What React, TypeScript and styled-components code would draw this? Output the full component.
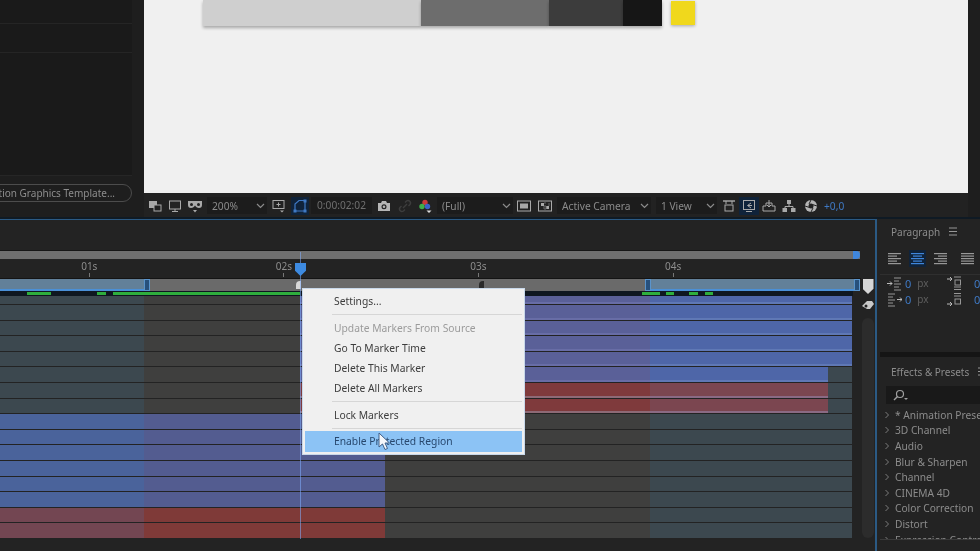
import React from "react";
import styled, { createGlobalStyle } from "styled-components";

const FONT = `"Noto Sans", "Open Sans", "Liberation Sans", sans-serif`;

const GlobalStyle = createGlobalStyle`
  html, body { margin: 0; padding: 0; background: #232323; }
  * { box-sizing: border-box; }
  svg { flex-shrink: 0; }
`;

type Tone = "gray" | "grayTint" | "blueLeft" | "blueMid" | "blueRight" | "blueFade" | "redLeft" | "redLow" | "redMid" | "redRight";

const TONES: Record<Tone, string> = {
  gray: "#3f3f3e",
  grayTint: "#3c484f",
  blueLeft: "#4a639b",
  blueMid: "#535c90",
  blueRight: "#4e66a8",
  blueFade: "#5a6098",
  redLeft: "#734652",
  redLow: "#7f3a38",
  redMid: "#7f3a3c",
  redRight: "#7b4650",
};

const STRIPES: Partial<Record<Tone, string>> = {
  blueFade: "#686da6",
  blueRight: "#5f78b5",
  redMid: "#8e6a76",
  redRight: "#8a6a84",
};

const COLUMNS = [144, 156, 85, 265, 178, 24];

const topBlue: Tone[] = ["grayTint", "gray", "blueFade", "blueFade", "blueRight", "blueRight"];
const shortBlue: Tone[] = ["grayTint", "gray", "blueFade", "blueFade", "blueRight", "grayTint"];
const shortRed: Tone[] = ["grayTint", "gray", "redMid", "redMid", "redRight", "grayTint"];
const lowBlue: Tone[] = ["blueLeft", "blueMid", "blueMid", "gray", "grayTint", "grayTint"];
const lowRed: Tone[] = ["redLeft", "redLow", "redLow", "gray", "grayTint", "grayTint"];

const TRACKS: Tone[][] = [
  topBlue, topBlue, topBlue, topBlue, topBlue,
  shortBlue, shortRed, shortRed,
  lowBlue, lowBlue, lowBlue, lowBlue, lowBlue, lowBlue,
  lowRed, lowRed,
];

const CACHE: [number, boolean][] = [
  [27, false], [24, true], [46, false], [9, true], [7, false], [187, true],
  [342, false], [18, true], [6, false], [8, true], [15, false], [9, true], [7, false], [8, true],
];

const EFFECTS = ["* Animation Presets", "3D Channel", "Audio", "Blur & Sharpen", "Channel", "CINEMA 4D", "Color Correction", "Distort", "Expression Controls"];

const Page = styled.div`
  width: 980px;
  height: 551px;
  overflow: hidden;
  display: flex;
  flex-direction: column;
  background: #232323;
  font-family: ${FONT};
  filter: blur(0.5px);
`;

const TopArea = styled.div`
  height: 217px;
  display: flex;
  flex: none;
  background: #1e1e1e;
`;

const LeftPanel = styled.div`
  width: 132px;
  flex: none;
  display: flex;
  flex-direction: column;
  align-items: flex-end;
`;

const ProjectList = styled.div`
  width: 100%;
  height: 176px;
  background: #1a1a1a;
  border-bottom: 1px solid #262626;
`;

const ProjectRow = styled.div<{ $h: number }>`
  height: ${(p) => p.$h}px;
  border-bottom: 1px solid #252525;
`;

const TemplateButton = styled.div`
  flex: none;
  width: 170px;
  height: 18px;
  margin-top: 8px;
  padding-right: 16px;
  border: 1.5px solid #4c4c4c;
  border-radius: 9px;
  font-size: 10px;
  line-height: 16px;
  text-align: right;
  color: #8d8d8d;
  white-space: nowrap;
`;

const Viewer = styled.div`
  width: 824px;
  margin-left: 12px;
  flex: none;
  display: flex;
  flex-direction: column;
`;

const Canvas = styled.div`
  height: 193px;
  flex: none;
  background: #f0f0f0;
  padding-left: 59px;
  display: flex;
  align-items: flex-start;
`;

const Swatch = styled.div<{ $w: number; $c: string }>`
  width: ${(p) => p.$w}px;
  height: 26px;
  background: ${(p) => p.$c};
  box-shadow: 0 2px 3px rgba(0, 0, 0, 0.3);
`;

const YellowSwatch = styled.div`
  width: 24px;
  height: 24px;
  margin: 1px 0 0 9px;
  background: #f0d81c;
  box-shadow: 0 1px 3px rgba(0, 0, 0, 0.3);
`;

const Toolbar = styled.div`
  flex: 1;
  display: flex;
  align-items: center;
  padding: 1px 0 0 1px;
  background: #222;
  color: #8b8b8b;
  font-size: 10.2px;
`;

const ToolSlot = styled.div<{ $w?: number; $active?: boolean; $ml?: number }>`
  width: ${(p) => p.$w ?? 20}px;
  height: 18px;
  margin-left: ${(p) => p.$ml ?? 0}px;
  flex: none;
  display: flex;
  align-items: center;
  justify-content: center;
  background: ${(p) => (p.$active ? "#10233a" : "transparent")};
`;

const Select = styled.div<{ $w: number; $ml?: number }>`
  width: ${(p) => p.$w}px;
  height: 17px;
  margin-left: ${(p) => p.$ml ?? 0}px;
  flex: none;
  padding: 0 2px 0 5px;
  display: flex;
  align-items: center;
  justify-content: space-between;
  background: #1c1c1c;
  white-space: nowrap;
`;

const Timecode = styled.div`
  width: 61px;
  height: 17px;
  margin-left: 2px;
  flex: none;
  background: #1c1c1c;
  color: #6f6f6f;
  line-height: 17px;
  text-align: center;
`;

const Exposure = styled.span`
  margin-left: 3px;
  color: #3f79c4;
`;

const BottomArea = styled.div`
  flex: 1;
  display: flex;
  min-height: 0;
  border-top: 2px solid #0f1a24;
`;

const TimelinePanel = styled.div`
  width: 877px;
  flex: none;
  position: relative;
  background: #232323;
  border-top: 1px solid #2b5a84;
  border-right: 2px solid #2b5a84;
  display: flex;
  padding-top: 31px;
`;

const TimeColumn = styled.div`
  width: 861px;
  flex: none;
  display: flex;
  flex-direction: column;
`;

const RangeBar = styled.div`
  height: 8px;
  width: 860px;
  flex: none;
  display: flex;
  justify-content: flex-end;
  background: #6f6f6f;
  box-shadow: 0 -1px 0 #161616;
`;

const RangeEnd = styled.div`
  width: 7px;
  background: #3f86dc;
  border-radius: 0 4px 4px 0;
`;

const Ruler = styled.div`
  height: 20px;
  flex: none;
  display: flex;
  margin-left: -8px;
  border-bottom: 1px solid #141414;
`;

const RulerMark = styled.div`
  width: 194.6px;
  flex: none;
  font-size: 10px;
  line-height: 14px;
  text-align: center;
  color: #8d8d8d;

  &::after {
    content: "";
    display: block;
    width: 1px;
    height: 4px;
    margin: 0 auto;
    background: #777;
  }
`;

const WorkBar = styled.div`
  height: 12px;
  flex: none;
  display: flex;
  width: 860px;
`;

const WorkSegment = styled.div<{ $w: number; $on?: boolean }>`
  width: ${(p) => p.$w}px;
  flex: none;
  background: ${(p) => (p.$on ? "#628099" : "#6a6a6a")};
  border-bottom: ${(p) => (p.$on ? "2px solid #4a90d8" : "none")};
`;

const BlueMarker = styled.div`
  width: 6px;
  flex: none;
  background: #27507c;
  border: 1px solid #5a94cc;
`;

const CommentSlot = styled.div`
  width: 5px;
  flex: none;
  background: #6a6a6a;
  padding-top: 2px;
`;

const CommentMarker = styled.div<{ $light?: boolean }>`
  height: 8px;
  background: ${(p) => (p.$light ? "#d8d8d8" : "#2a2a2a")};
  border-radius: 4px 0 0 0;
`;

const CacheBar = styled.div`
  height: 5px;
  flex: none;
  width: 853px;
  display: flex;
  align-items: center;
  background: #0f1720;
`;

const CacheSegment = styled.div<{ $w: number; $on: boolean }>`
  width: ${(p) => p.$w}px;
  height: 3px;
  flex: none;
  background: ${(p) => (p.$on ? "#2fae3d" : "transparent")};
`;

const TrackRow = styled.div<{ $short?: boolean }>`
  height: ${(p) => (p.$short ? 9 : 15.6)}px;
  flex: none;
  display: flex;
  width: 852px;
  border-bottom: 1px solid #232323;
`;

const TrackCell = styled.div<{ $w: number; $tone: Tone }>`
  width: ${(p) => p.$w}px;
  flex: none;
  background: ${(p) => TONES[p.$tone]};
  box-shadow: ${(p) => (STRIPES[p.$tone] ? `inset 0 -2px 0 ${STRIPES[p.$tone]}` : "none")};
`;

const Rail = styled.div`
  flex: 1;
  display: flex;
  flex-direction: column;
  align-items: center;
  padding-top: 28px;
`;

const Shield = styled.div`
  width: 11px;
  height: 15px;
  background: #d6d6d6;
  clip-path: polygon(0 0, 100% 0, 100% 65%, 50% 100%, 0 65%);
`;

const ZoomHandle = styled.div`
  height: 22px;
  display: flex;
  align-items: center;
`;

const RailTrack = styled.div`
  width: 12px;
  height: 220px;
  margin-top: 2px;
  background: #2c2c2c;
  border-radius: 6px;
`;

const Playhead = styled.div`
  position: absolute;
  left: 300px;
  top: 32px;
  width: 1px;
  height: 287px;
  background: rgba(130, 175, 255, 0.55);
`;

const PlayheadCap = styled.div`
  position: absolute;
  left: -5px;
  top: 11px;
  width: 11px;
  height: 13px;
  background: #3d8ae0;
  clip-path: polygon(0 0, 100% 0, 100% 60%, 50% 100%, 0 60%);
`;

const Menu = styled.div`
  position: absolute;
  left: 303px;
  top: 69px;
  width: 221px;
  height: 165px;
  padding: 2px;
  background: #f0f0f0;
  box-shadow: 0 0 0 1px #c8d8ea;
  font-size: 10.3px;
  color: #3d3d3d;
`;

const MenuItem = styled.div<{ $disabled?: boolean; $active?: boolean }>`
  height: ${(p) => (p.$active ? 21 : 20)}px;
  padding-left: 29px;
  line-height: ${(p) => (p.$active ? 21 : 20)}px;
  white-space: nowrap;
  color: ${(p) => (p.$disabled ? "#9b9b9b" : p.$active ? "#28486e" : "#3d3d3d")};
  background: ${(p) => (p.$active ? "#8cc3f5" : "transparent")};
`;

const MenuSeparator = styled.div<{ $h: number }>`
  height: ${(p) => p.$h}px;
  margin-left: 27px;
  display: flex;
  align-items: center;

  &::after {
    content: "";
    display: block;
    width: 100%;
    height: 1px;
    background: #d6d6d6;
  }
`;

const CursorIcon = styled.svg`
  position: absolute;
  left: 74px;
  top: 143px;
`;

const SidePanels = styled.div`
  flex: 1;
  min-width: 0;
  display: flex;
  flex-direction: column;
  margin-left: 3px;
  color: #8c8c8c;
  font-size: 10px;
  overflow: hidden;
`;

const ParagraphPanel = styled.div`
  height: 133px;
  flex: none;
  background: #232323;
`;

const PanelHeader = styled.div<{ $h: number }>`
  height: ${(p) => p.$h}px;
  padding-left: 11px;
  display: flex;
  align-items: center;
  gap: 9px;
  white-space: nowrap;
`;

const AlignRow = styled.div`
  height: 31px;
  padding: 0 0 2px 6px;
  display: flex;
  align-items: center;
  gap: 6px;
  border-bottom: 1px solid #2f2f2f;
`;

const AlignButton = styled.div<{ $active?: boolean; $ml?: number }>`
  width: 17px;
  height: 17px;
  flex: none;
  margin-left: ${(p) => p.$ml ?? 0}px;
  display: flex;
  align-items: center;
  justify-content: center;
  background: ${(p) => (p.$active ? "#10233a" : "transparent")};
`;

const IndentRow = styled.div`
  height: 16px;
  display: flex;
  align-items: center;
  padding-left: 6px;
  font-size: 10px;
`;

const IndentGroup = styled.div<{ $gap: number; $w: number }>`
  width: ${(p) => p.$w}px;
  flex: none;
  display: flex;
  align-items: center;
  gap: ${(p) => p.$gap}px;
`;

const BlueValue = styled.span`
  color: #3f79c4;
  font-size: 11px;
  line-height: 1;
`;

const DimUnit = styled.span`
  color: #5e5e5e;
  margin-left: 3px;
`;

const PanelGap = styled.div`
  height: 5px;
  flex: none;
  background: #151515;
`;

const EffectsPanel = styled.div`
  flex: 1;
  min-height: 0;
  background: #232323;
`;

const SearchBox = styled.div`
  height: 18px;
  margin: 0 0 3px 6px;
  padding-left: 6px;
  display: flex;
  align-items: center;
  background: #191919;
`;

const EffectList = styled.div`
  height: 133px;
  overflow: hidden;
  border-bottom: 1px solid #3a3a3a;
`;

const EffectRow = styled.div`
  height: 15.6px;
  display: flex;
  align-items: center;
  gap: 6px;
  padding-left: 5px;
  font-size: 10.2px;
  white-space: nowrap;
`;

const Svg = ({ children, size = 16, w }: { children: React.ReactNode; size?: number; w?: number }) => (
  <svg width={w ?? size} height={size} viewBox={`0 0 ${w ?? size} ${size}`} fill="none">
    {children}
  </svg>
);

const G = "#a9a9a9";

const Icons = {
  snapshotStack: (
    <Svg>
      <rect x="2" y="3" width="8" height="7" fill={G} />
      <rect x="7" y="7" width="7" height="6" fill="#222" stroke={G} />
    </Svg>
  ),
  monitor: (
    <Svg>
      <rect x="2.5" y="3" width="11" height="8" stroke={G} />
      <path d="M8 11v2M5 13.5h6" stroke={G} />
    </Svg>
  ),
  mask: (
    <Svg>
      <path d="M1 3h14v4c0 2-1 3-3 3s-3-1-4-2.500C7 9 6 10 4 10S1 9 1 7z" fill={G} />
      <circle cx="4.500" cy="6.500" r="1.500" fill="#222" />
      <circle cx="11.500" cy="6.500" r="1.500" fill="#222" />
      <path d="M6 12h4l-2 2.500z" fill={G} />
    </Svg>
  ),
  region: (
    <Svg>
      <rect x="2" y="2.500" width="11" height="8" stroke={G} />
      <path d="M7.500 4.500v4M5.500 6.500h4" stroke={G} />
      <path d="M9 12.500h4l-2 2z" fill={G} />
    </Svg>
  ),
  roi: (
    <Svg>
      <path d="M3 13V6l4-3.500h6V13z" stroke="#3f79c4" strokeWidth="1.200" />
      <rect x="1.500" y="11.500" width="3" height="3" fill="#3f79c4" />
      <rect x="11.500" y="11.500" width="3" height="3" fill="#3f79c4" />
      <rect x="11.500" y="1.500" width="3" height="3" fill="#3f79c4" />
    </Svg>
  ),
  camera: (
    <Svg>
      <path d="M2 5h3l1-2h4l1 2h3v8H2z" fill="#b5b5b5" />
      <circle cx="8" cy="8.800" r="2.500" fill="#222" />
      <circle cx="8" cy="8.800" r="1.300" fill="#b5b5b5" />
    </Svg>
  ),
  link: (
    <Svg>
      <path d="M6 10l4-4M4.500 8l-1.500 1.500a2.500 2.500 0 0 0 3.500 3.500L8 11.500M8 4.500 9.500 3A2.500 2.500 0 0 1 13 6.500L11.500 8" stroke="#3d3d3d" strokeWidth="1.400" />
    </Svg>
  ),
  dots: (
    <Svg>
      <circle cx="8" cy="4.500" r="2.700" fill="#c83a3a" />
      <circle cx="5" cy="8.500" r="2.700" fill="#3fae4a" />
      <circle cx="10.500" cy="8.500" r="2.700" fill="#3a62c8" />
      <path d="M9.500 12.500h5l-2.500 2.500z" fill="#ddd" />
    </Svg>
  ),
  fit: (
    <Svg>
      <rect x="1.500" y="3" width="13" height="10" stroke={G} />
      <rect x="4" y="5.500" width="8" height="5" fill={G} />
    </Svg>
  ),
  checker: (
    <Svg>
      <rect x="1.500" y="3" width="13" height="10" stroke={G} />
      <path d="M4 5h3v3H4zM9 8h3v3H9z" fill={G} />
      <path d="M7 8h2v3H7zM7 5h2M12 5v3" stroke="#666" />
    </Svg>
  ),
  fastPreview: (
    <Svg>
      <path d="M2 3h12" stroke={G} strokeWidth="1.400" />
      <path d="M5 3v3M11 3v3" stroke={G} />
      <rect x="4" y="7" width="8" height="6" stroke={G} />
    </Svg>
  ),
  timeline: (
    <Svg>
      <rect x="2.500" y="2.500" width="11" height="9" stroke={G} />
      <path d="M10 5 6.500 7.500 10 10M7 7.500h4" stroke={G} />
      <path d="M5 13.500h6" stroke={G} />
    </Svg>
  ),
  comp: (
    <Svg>
      <path d="M2 8h3V5h6v3h3v5H2z" stroke={G} />
      <path d="M8 2v7M6 7l2 2 2-2" stroke={G} />
    </Svg>
  ),
  flow: (
    <Svg>
      <rect x="6" y="2" width="4" height="4" fill={G} />
      <rect x="1.500" y="10" width="4.500" height="4" fill={G} />
      <rect x="10" y="10" width="4.500" height="4" fill={G} />
      <path d="M8 6v2.500M4 10V8.500h8V10" stroke={G} />
    </Svg>
  ),
  exposure: (
    <Svg>
      <circle cx="8" cy="8" r="6" fill="#b5b5b5" />
      <circle cx="8" cy="8" r="2.500" fill="#222" />
      <path d="M8 2 6 6M14 8 9.500 6.500M8 14l2-4M2 8l4.500 1.500" stroke="#222" />
    </Svg>
  ),
};

const Chevron = () => (
  <Svg size={6} w={9}>
    <path d="M1 1l3.500 3.500L8 1" stroke="#8b8b8b" strokeWidth="1.200" />
  </Svg>
);

const PanelMenuIcon = () => (
  <Svg size={9} w={9}>
    <path d="M0 1h8M0 4.500h8M0 8h8" stroke="#979797" />
  </Svg>
);

const AlignLines = ({ align, color = "#979797" }: { align: "left" | "center" | "right" | "full"; color?: string }) => {
  const widths = [13, 9, 13, 9, 13];
  return (
    <Svg size={13} w={13}>
      {widths.map((w, i) => {
        const len = align === "full" ? 13 : w;
        const x = align === "left" || align === "full" ? 0 : align === "right" ? 13 - len : (13 - len) / 2;
        return <rect key={i} x={x} y={1 + i * 2.500} width={len} height="1.200" fill={color} />;
      })}
    </Svg>
  );
};

const IndentIcon = ({ variant }: { variant: 0 | 1 | 2 | 3 }) => (
  <Svg size={15} w={16}>
    {variant < 2 ? (
      <>
        <path d={variant === 0 ? "M1 7.500h5M4 5.500l2 2-2 2" : "M11 7.500h5M14 5.500l2 2-2 2"} stroke="#bbb" />
        <path d={variant === 0 ? "M8 2h7M8 5h5M8 8h7M8 11h5M8 14h7" : "M2 2h7M2 5h5M2 8h7M2 11h5M2 14h7"} stroke="#979797" />
      </>
    ) : (
      <>
        <path d={variant === 2 ? "M1 3h5M4 1l2 2-2 2" : "M1 12h5M4 10l2 2-2 2"} stroke="#bbb" />
        <path d={variant === 2 ? "M8 1h7M8 11h7M8 13.500h7" : "M8 1.500h7M8 4h7"} stroke="#979797" />
        <rect x="9" y={variant === 2 ? 4 : 7} width="5.500" height="5" stroke="#979797" />
      </>
    )}
  </Svg>
);

export default function App() {
  return (
    <Page>
      <GlobalStyle />
      <TopArea>
        <LeftPanel>
          <ProjectList>
            <ProjectRow $h={24} />
            <ProjectRow $h={29} />
          </ProjectList>
          <TemplateButton>Motion Graphics Template...</TemplateButton>
        </LeftPanel>
        <Viewer>
          <Canvas>
            <Swatch $w={218} $c="#cfcfcf" />
            <Swatch $w={128} $c="#6d6d6d" />
            <Swatch $w={74} $c="#3c3c3c" />
            <Swatch $w={39} $c="#161616" />
            <YellowSwatch />
          </Canvas>
          <Toolbar>
            <ToolSlot>{Icons.snapshotStack}</ToolSlot>
            <ToolSlot>{Icons.monitor}</ToolSlot>
            <ToolSlot>{Icons.mask}</ToolSlot>
            <Select $w={60} $ml={2}>200%<Chevron /></Select>
            <ToolSlot $ml={2}>{Icons.region}</ToolSlot>
            <ToolSlot $w={18} $ml={2} $active>{Icons.roi}</ToolSlot>
            <Timecode>0:00:02:02</Timecode>
            <ToolSlot $ml={2}>{Icons.camera}</ToolSlot>
            <ToolSlot $ml={1}>{Icons.link}</ToolSlot>
            <ToolSlot>{Icons.dots}</ToolSlot>
            <Select $w={76} $ml={2}>(Full)<Chevron /></Select>
            <ToolSlot $ml={1}>{Icons.fit}</ToolSlot>
            <ToolSlot $ml={1}>{Icons.checker}</ToolSlot>
            <Select $w={94} $ml={2}>Active Camera<Chevron /></Select>
            <Select $w={61} $ml={5}>1 View<Chevron /></Select>
            <ToolSlot $ml={2}>{Icons.fastPreview}</ToolSlot>
            <ToolSlot $active>{Icons.timeline}</ToolSlot>
            <ToolSlot>{Icons.comp}</ToolSlot>
            <ToolSlot>{Icons.flow}</ToolSlot>
            <ToolSlot $ml={2}>{Icons.exposure}</ToolSlot>
            <Exposure>+0,0</Exposure>
          </Toolbar>
        </Viewer>
      </TopArea>
      <BottomArea>
        <TimelinePanel>
          <TimeColumn>
            <RangeBar>
              <RangeEnd />
            </RangeBar>
            <Ruler>
              {["01s", "02s", "03s", "04s"].map((label) => (
                <RulerMark key={label}>{label}</RulerMark>
              ))}
            </Ruler>
            <WorkBar>
              <WorkSegment $w={144} $on />
              <BlueMarker />
              <WorkSegment $w={146} />
              <CommentSlot><CommentMarker $light /></CommentSlot>
              <WorkSegment $w={178} />
              <CommentSlot><CommentMarker /></CommentSlot>
              <WorkSegment $w={161} />
              <BlueMarker />
              <WorkSegment $w={203} $on />
              <BlueMarker />
            </WorkBar>
            <CacheBar>
              {CACHE.map(([w, on], i) => (
                <CacheSegment key={i} $w={w} $on={on} />
              ))}
            </CacheBar>
            {TRACKS.map((tones, i) => (
              <TrackRow key={i} $short={i === 0}>
                {tones.map((tone, c) => (
                  <TrackCell key={c} $w={COLUMNS[c]} $tone={tone} />
                ))}
              </TrackRow>
            ))}
          </TimeColumn>
          <Rail>
            <Shield />
            <ZoomHandle>
              <Svg size={14} w={14}>
                <path d="M1 8l5-5h5l2 3-4 5H6z" fill="#c9c9c9" />
                <circle cx="5" cy="8" r="1.500" fill="#232323" />
              </Svg>
            </ZoomHandle>
            <RailTrack />
          </Rail>
          <Playhead>
            <PlayheadCap />
          </Playhead>
          <Menu>
            <MenuItem>Settings...</MenuItem>
            <MenuSeparator $h={7} />
            <MenuItem $disabled>Update Markers From Source</MenuItem>
            <MenuItem>Go To Marker Time</MenuItem>
            <MenuItem>Delete This Marker</MenuItem>
            <MenuItem>Delete All Markers</MenuItem>
            <MenuSeparator $h={7} />
            <MenuItem>Lock Markers</MenuItem>
            <MenuSeparator $h={6} />
            <MenuItem $active>Enable Protected Region</MenuItem>
            <CursorIcon width="14" height="19" viewBox="0 0 14 19">
              <path d="M2 1v14l3.500-3 2.500 5.500 2.500-1L8 11h4.500z" fill="#f4f6fa" stroke="#3f5f88" strokeWidth="1" />
            </CursorIcon>
          </Menu>
        </TimelinePanel>
        <SidePanels>
          <ParagraphPanel>
            <PanelHeader $h={25}>
              Paragraph
              <PanelMenuIcon />
            </PanelHeader>
            <AlignRow>
              <AlignButton><AlignLines align="left" /></AlignButton>
              <AlignButton $active><AlignLines align="center" color="#3f86dc" /></AlignButton>
              <AlignButton><AlignLines align="right" /></AlignButton>
              <AlignButton $ml={4}><AlignLines align="full" /></AlignButton>
            </AlignRow>
            <IndentRow>
              <IndentGroup $w={60} $gap={3}><IndentIcon variant={0} /><BlueValue>0</BlueValue><DimUnit>px</DimUnit></IndentGroup>
              <IndentGroup $w={40} $gap={12}><IndentIcon variant={2} /><BlueValue>0</BlueValue></IndentGroup>
            </IndentRow>
            <IndentRow>
              <IndentGroup $w={60} $gap={3}><IndentIcon variant={1} /><BlueValue>0</BlueValue><DimUnit>px</DimUnit></IndentGroup>
              <IndentGroup $w={40} $gap={12}><IndentIcon variant={3} /><BlueValue>0</BlueValue></IndentGroup>
            </IndentRow>
          </ParagraphPanel>
          <PanelGap />
          <EffectsPanel>
            <PanelHeader $h={29}>
              Effects &amp; Presets
              <PanelMenuIcon />
            </PanelHeader>
            <SearchBox>
              <Svg size={12} w={18}>
                <circle cx="8" cy="5" r="3.500" stroke="#a0a0a0" strokeWidth="1.200" />
                <path d="M5.500 7.500 2 11" stroke="#a0a0a0" strokeWidth="1.400" />
                <path d="M12 9h4l-2 2z" fill="#a0a0a0" />
              </Svg>
            </SearchBox>
            <EffectList>
              {EFFECTS.map((name) => (
                <EffectRow key={name}>
                  <Svg size={8} w={4}>
                    <path d="M0.500 1 3.500 4 0.500 7" stroke="#7d7d7d" />
                  </Svg>
                  {name}
                </EffectRow>
              ))}
            </EffectList>
          </EffectsPanel>
        </SidePanels>
      </BottomArea>
    </Page>
  );
}
